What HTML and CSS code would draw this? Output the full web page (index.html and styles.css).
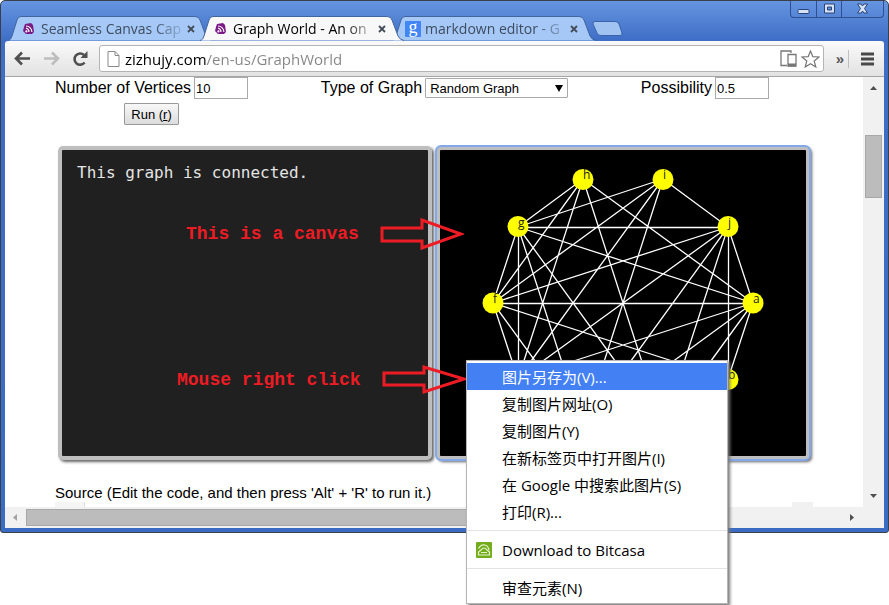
FILE: index.html
```html
<!DOCTYPE html>
<html lang="en">
<head>
<meta charset="utf-8">
<title>Graph World</title>
<link rel="stylesheet" href="styles.css">
</head>
<body>
<svg class="defs" width="0" height="0" aria-hidden="true">
  <defs>
    <symbol id="feed" viewBox="0 0 12 12">
      <path d="M2 1 L8 0 L10 2 L11 9 L9 11 L3 11 L0 8 L1 4Z" fill="#7b1a86"/>
      <path d="M3 3 Q8 3 9 9 M3 5 Q6 6 6 9" fill="none" stroke="#fff" stroke-width="1.2"/>
      <circle cx="3.4" cy="8.4" r="1.1" fill="#fff"/>
    </symbol>
    <symbol id="shape" viewBox="0 0 206 25">
      <path d="M0 24.5 C2 24 3 23 4 20 L9 4 Q10 .5 13 .5 H187 Q191 .5 192 4 L198 20 Q200 24 204 24.5"/>
    </symbol>
    <symbol id="cross" viewBox="0 0 8 8"><path d="M1 1 L7 7 M7 1 L1 7" fill="none" stroke="#444c58" stroke-width="1.8"/></symbol>
  </defs>
</svg>
<div class="window">
  <header class="titlebar">
    <nav class="tabs">
      <div class="tab">
        <svg class="tab-shape"><use href="#shape"/></svg>
        <svg class="favicon"><use href="#feed"/></svg>
        <span class="tab-title">Seamless Canvas Cap</span>
        <button class="tab-close" aria-label="Close tab"><svg><use href="#cross"/></svg></button>
      </div>
      <div class="tab active">
        <svg class="tab-shape"><use href="#shape"/></svg>
        <svg class="favicon"><use href="#feed"/></svg>
        <span class="tab-title">Graph World - An on</span>
        <button class="tab-close" aria-label="Close tab"><svg><use href="#cross"/></svg></button>
      </div>
      <div class="tab">
        <svg class="tab-shape"><use href="#shape"/></svg>
        <span class="favicon google">g</span>
        <span class="tab-title">markdown editor - G</span>
        <button class="tab-close" aria-label="Close tab"><svg><use href="#cross"/></svg></button>
      </div>
      <button class="new-tab" aria-label="New tab"><svg width="32" height="17" viewBox="0 0 32 17"><path d="M3 1.500H23Q26 1.500 27 4L30 13Q30.500 15.500 28 15.500H9Q6 15.500 5 13L1 4Q.5 1.500 3 1.500Z" fill="#a0c3f2" stroke="#3b63a8"/></svg></button>
    </nav>
    <div class="controls">
      <button aria-label="Minimize"><svg width="13" height="13" viewBox="0 0 13 13"><rect x="1" y="7.500" width="11" height="4" rx="1" fill="#d5e2f5" stroke="#2b4478"/></svg></button>
      <button aria-label="Maximize"><svg width="13" height="13" viewBox="0 0 13 13"><path d="M1.500 2H11.500V11H1.500Z M4.500 5V8H8.500V5Z" fill="#d5e2f5" fill-rule="evenodd" stroke="#2b4478"/></svg></button>
      <button class="wide" aria-label="Close"><svg width="13" height="13" viewBox="0 0 13 13"><path d="M1.500 2H5L6.500 4L8 2H11.500L8.500 6.500L11.500 11H8L6.500 9L5 11H1.500L4.500 6.500Z" fill="#d5e2f5" stroke="#2b4478"/></svg></button>
    </div>
  </header>
  <div class="toolbar">
    <button aria-label="Back"><svg width="17" height="15" viewBox="0 0 17 15"><path d="M16 7.500H3M8 1.500L2 7.500L8 13.500" fill="none" stroke="#505050" stroke-width="2.600"/></svg></button>
    <button aria-label="Forward"><svg width="17" height="15" viewBox="0 0 17 15"><path d="M1 7.500H14M9 1.500L15 7.500L9 13.500" fill="none" stroke="#bdbdbd" stroke-width="2.600"/></svg></button>
    <button aria-label="Reload"><svg width="17" height="16" viewBox="0 0 17 16"><path d="M12.600 11.500A5.600 5.600 0 1 1 12 4" fill="none" stroke="#505050" stroke-width="2.600"/><path d="M15.500 0V7H8.500Z" fill="#505050"/></svg></button>
    <div class="omnibox">
      <svg width="13" height="16" viewBox="0 0 13 16"><path d="M1 .5H8L12 4.500V15.500H1ZM8 .5V4.500H12" fill="#fff" stroke="#8a8a8a"/></svg>
      <input type="text" aria-label="Address" value="zizhujy.com/en-us/GraphWorld">
      <svg width="17" height="17" viewBox="0 0 17 17"><path d="M11 3V1H1V15.500H7M8 4.500H16V16H8Z" fill="none" stroke="#777" stroke-width="1.300"/><path d="M8 13.500H16V16.500H8Z" fill="#777"/></svg>
      <svg width="19" height="18" viewBox="0 0 19 18"><path d="M9.500 1L11.800 6.600L18 7L13.200 11L14.800 17L9.500 13.700L4.200 17L5.800 11L1 7L7.200 6.600Z" fill="#fff" stroke="#777" stroke-width="1.200"/></svg>
    </div>
    <span class="more">»</span>
    <button class="menu-button" aria-label="Menu"><svg width="13" height="14" viewBox="0 0 13 14"><path d="M0 2H13M0 7H13M0 12H13" stroke="#484848" stroke-width="3"/></svg></button>
  </div>
  <div class="viewport">
    <main class="page">
      <form class="options" onsubmit="return false">
        <div class="field-stack">
          <div class="field"><label for="count">Number of Vertices</label><input id="count" type="text" value="10"></div>
          <button class="run" type="submit">Run (<u>r</u>)</button>
        </div>
        <div class="field"><label for="kind">Type of Graph</label><span class="select-box"><select id="kind"><option>Random Graph</option></select></span></div>
        <div class="field"><label for="chance">Possibility</label><input id="chance" type="text" value="0.5"></div>
      </form>
      <div class="panels">
        <section class="panel output">This graph is connected.</section>
        <section class="panel graph">
          <svg viewBox="0 0 366 306">
            <path class="edges" d="M143 29L78 77M143 29L53 153M143 29L78 229M143 29L223 277M143 29L313 153M223 29L78 77M223 29L53 153M223 29L78 229M223 29L143 277M223 29L288 77M288 77.500H78M288 77L53 153M288 77L78 229M288 77L143 277M288 77L223 277M288.500 77V229M288 77L313 153M78 77L313 153M78 77L53 153M78.500 77V229M78 77L143 277M78 77L223 277M53 153.500H313M53 153L78 229M53 153L143 277M53 153L288 229M313 153L288 229M313 153L223 277M313 153L143 277M313 153L78 229"/>
            <g class="nodes"><circle cx="313" cy="153" r="10.500"/><circle cx="288" cy="229.500" r="10.500"/><circle cx="223" cy="277" r="10.500"/><circle cx="143" cy="277" r="10.500"/><circle cx="78" cy="229.500" r="10.500"/><circle cx="53" cy="153" r="10.500"/><circle cx="78" cy="76.500" r="10.500"/><circle cx="143" cy="29.500" r="10.500"/><circle cx="223" cy="29.500" r="10.500"/><circle cx="288" cy="76.500" r="10.500"/></g>
            <g class="names"><text x="313" y="153">a</text><text x="288" y="229">b</text><text x="53" y="153">f</text><text x="78" y="77">g</text><text x="143" y="29">h</text><text x="223" y="29">i</text><text x="288" y="77">j</text></g>
          </svg>
        </section>
        <div class="note first"><span>This is a canvas</span><svg width="84" height="32" viewBox="0 0 84 32"><path d="M2 10H42V2L81 16L42 30V23H2Z"/></svg></div>
        <div class="note second"><span>Mouse right click</span><svg width="84" height="32" viewBox="0 0 84 32"><path d="M2 10H42V4L82 16L42 29V22H2Z"/></svg></div>
      </div>
      <p class="caption">Source (Edit the code, and then press 'Alt' + 'R' to run it.)</p>
      <div class="editor"><span class="gutter"></span><span class="editor-bar"></span></div>
    </main>
    <div class="vbar">
      <svg width="7" height="4" viewBox="0 0 7 4"><path d="M0 4L3.500 0L7 4Z"/></svg>
      <div class="vtrack"><div class="thumb"></div></div>
      <svg width="7" height="4" viewBox="0 0 7 4"><path d="M0 0L3.500 4L7 0Z"/></svg>
    </div>
    <div class="hbar">
      <svg class="dim" width="4" height="7" viewBox="0 0 4 7"><path d="M4 0L0 3.500L4 7Z"/></svg>
      <div class="htrack"><div class="thumb"></div></div>
      <svg width="4" height="7" viewBox="0 0 4 7"><path d="M0 0L4 3.500L0 7Z"/></svg>
    </div>
  </div>
</div>
<div class="context-menu" lang="zh-CN">
  <button class="selected">图片另存为(V)...</button>
  <button>复制图片网址(O)</button>
  <button>复制图片(Y)</button>
  <button>在新标签页中打开图片(I)</button>
  <button>在 Google 中搜索此图片(S)</button>
  <button>打印(R)...</button>
  <hr>
  <button><svg class="item-icon" width="16" height="16" viewBox="0 0 16 16"><rect width="16" height="16" rx="1" fill="#74ad1c"/><path d="M2.500 6.500Q5 2 9 3Q12 3.500 13 8M5 8Q8 4 11 8L13.500 10V13H2.500V10Z M5 10.500H11" fill="none" stroke="#e6f3cf" stroke-width="1.200"/></svg>Download to Bitcasa</button>
  <hr>
  <button>审查元素(N)</button>
</div>
</body>
</html>
```
FILE: styles.css
```css
* { box-sizing: border-box; }
body { margin: 0; background: #fff; font-family: "Liberation Sans", sans-serif; font-size: 16px; color: #000; }
button { font: inherit; color: inherit; padding: 0; border: 0; background: none; }
svg { display: block; }
.defs { position: absolute; }

.window {
  border: 1px solid #3a3f4a;
  border-radius: 5px 5px 3px 3px;
  padding: 0 4px 4px;
  background: linear-gradient(#6595e0, #3e6dc6 40px, #3b6cc4);
  overflow: hidden;
}
.titlebar { display: flex; justify-content: space-between; align-items: flex-end; height: 40px; }
.tabs { display: flex; align-items: flex-end; padding-left: 3px; font-family: "Open Sans", "Noto Sans", sans-serif; font-size: 14px; }
.tab { position: relative; display: flex; align-items: center; width: 206px; height: 25px; margin-right: -14px; padding: 0 20px 0 15px; color: #3f4c60; }
.tab-shape { position: absolute; inset: 0; width: 206px; height: 25px; fill: #a5c8f6; stroke: #41659f; }
.active { z-index: 1; color: #000; }
.active .tab-shape { fill: #f8f8f8; }
.favicon { position: relative; flex: none; width: 12px; height: 12px; margin-right: 6px; }
.google { width: 16px; height: 16px; margin: 0 4px 0 -2px; border-radius: 1px; background: #4285f4; color: #fff; font: 18px/12px "Liberation Serif", serif; text-align: center; }
.tab-title { position: relative; flex: 1; white-space: nowrap; line-height: 20px; mask-image: linear-gradient(to right, #000 calc(100% - 28px), rgba(0, 0, 0, 0.2)); }
.tab-close { position: relative; margin: 0 0 0 6px; }
.tab-close svg { width: 8px; height: 8px; }
.new-tab { margin: 0 0 4px 8px; }
.controls { display: flex; align-self: flex-start; height: 17px; border: 1px solid #2f4f91; border-top: 0; border-radius: 0 0 4px 4px; }
.controls button { display: flex; align-items: center; justify-content: center; width: 25px; padding-bottom: 1px; border-left: 1px solid #2f4f91; }
.controls button:first-child { border-left: 0; }
.controls .wide { width: 42px; }

.toolbar { display: flex; align-items: center; gap: 12px; height: 36px; padding: 0 10px 0 9px; background: linear-gradient(#fafafa, #e2e2e2); border-bottom: 1px solid #a6a6a6; border-radius: 3px 3px 0 0; }
.omnibox { display: flex; align-items: center; flex: 1; height: 27px; margin-left: -2px; padding: 0 3px 0 7px; background: #fff; border: 1px solid #b4b4b4; border-radius: 3px; gap: 4px; }
.omnibox input { flex: 1; min-width: 0; height: 24px; padding: 0; margin-left: 1px; border: 0; outline: 0; font: 15px "Open Sans", "Noto Sans", sans-serif; color: transparent; background: linear-gradient(to right, #000 81px, #848484 81px); background-clip: text; -webkit-background-clip: text; }
.more { padding-right: 4px; border-right: 1px solid #c0c0c0; font-size: 15px; line-height: 18px; font-weight: bold; color: #555; }

.viewport { display: grid; grid-template-columns: 1fr 21px; background: #fff; }
.page { padding: 0 50px; min-width: 0; }
.options { display: flex; justify-content: space-between; align-items: flex-start; padding-right: 44px; }
.field-stack { display: flex; flex-direction: column; align-items: center; gap: 4px; }
.field { display: flex; align-items: center; gap: 3px; white-space: nowrap; height: 22px; }
.field input { width: 54px; height: 22px; padding: 0 1px; border: 1px solid #a9a9a9; font: 13px "Liberation Sans", sans-serif; }
.select-box { position: relative; }
.select-box::after { content: ""; position: absolute; right: 5px; top: 7px; border: 4px solid transparent; border-top: 7px solid #000; border-bottom: 0; }
.select-box select { display: block; appearance: none; width: 143px; height: 20px; padding: 0 4px; border: 1px solid #a9a9a9; border-radius: 1px; background: #fff; color: #000; font: 13px "Liberation Sans", sans-serif; }
.run { width: 55px; height: 22px; border: 1px solid #999; border-radius: 1px; background: linear-gradient(#f8f8f8, #dcdcdc); font-size: 13px; }

.panels { position: relative; display: grid; grid-template-columns: 1fr 1fr; gap: 4px; margin: 21px 3px 0; }
.panel { border: 4px solid #bebebe; border-radius: 5px; box-shadow: 2px 2px 3px #666; }
.output { padding: 13px 15px; background: #202020; color: #e4e4e4; font: 16px/20px "DejaVu Sans Mono", monospace; white-space: nowrap; }
.graph { background: #000; outline: 2px solid #81a8ea; outline-offset: -1px; }
.graph svg { width: 100%; }
.edges { fill: none; stroke: #fff; stroke-width: 1.3; }
.nodes { fill: #ff0; }
.names { font: 12px "Open Sans", sans-serif; text-anchor: start; fill: #222; }

.note { position: absolute; display: flex; align-items: center; gap: 21px; color: #ed1c24; font: bold 18px/20px "Liberation Mono", monospace; white-space: nowrap; }
.note svg { fill: none; stroke: #ed1c24; stroke-width: 3; }
.note span { height: 20px; }
.first { left: 128px; top: 72px; }
.second { left: 119px; top: 217px; }
.second span { height: 18px; overflow: hidden; }

.caption { margin: 23px 0 0; font-size: 15px; line-height: 19px; white-space: nowrap; }
.editor { display: flex; justify-content: space-between; height: 5px; }
.gutter { width: 30px; background: #f5f5f5; border-right: 1px solid #ddd; }
.editor-bar { width: 21px; background: #f1f1f1; }

.vbar { display: flex; flex-direction: column; align-items: center; padding: 9px 2px; background: #f1f1f1; fill: #505050; }
.vtrack { flex: 1; width: 100%; padding: 45px 0 10px; }
.vtrack .thumb { height: 18%; min-height: 63px; }
.thumb { background: #bcbcbc; border: 1px solid #a8a8a8; }
.hbar { grid-column: 1 / -1; display: flex; align-items: center; gap: 9px; height: 21px; padding: 2px 30px 2px 8px; background: #f1f1f1; fill: #505050; }
.dim { fill: #a3a3a3; }
.htrack { flex: 1; align-self: stretch; }
.htrack .thumb { width: 76%; height: 100%; }

.context-menu { position: absolute; left: 466px; top: 360px; width: 262px; padding: 2px 0; background: #fff; border: 1px solid #b5b5b5; box-shadow: 2px 2px 3px #777; font: 15px "Open Sans", "Noto Sans CJK SC", sans-serif; }
.context-menu button { position: relative; display: block; width: 100%; height: 27px; padding: 1px 0 0 35px; text-align: left; line-height: 26px; white-space: nowrap; }
.context-menu .selected { background: #4280f4; color: #fff; }
.context-menu hr { margin: 5px 0; border: 0; border-top: 1px solid #e3e3e3; }
.item-icon { position: absolute; left: 9px; top: 6px; }
```
